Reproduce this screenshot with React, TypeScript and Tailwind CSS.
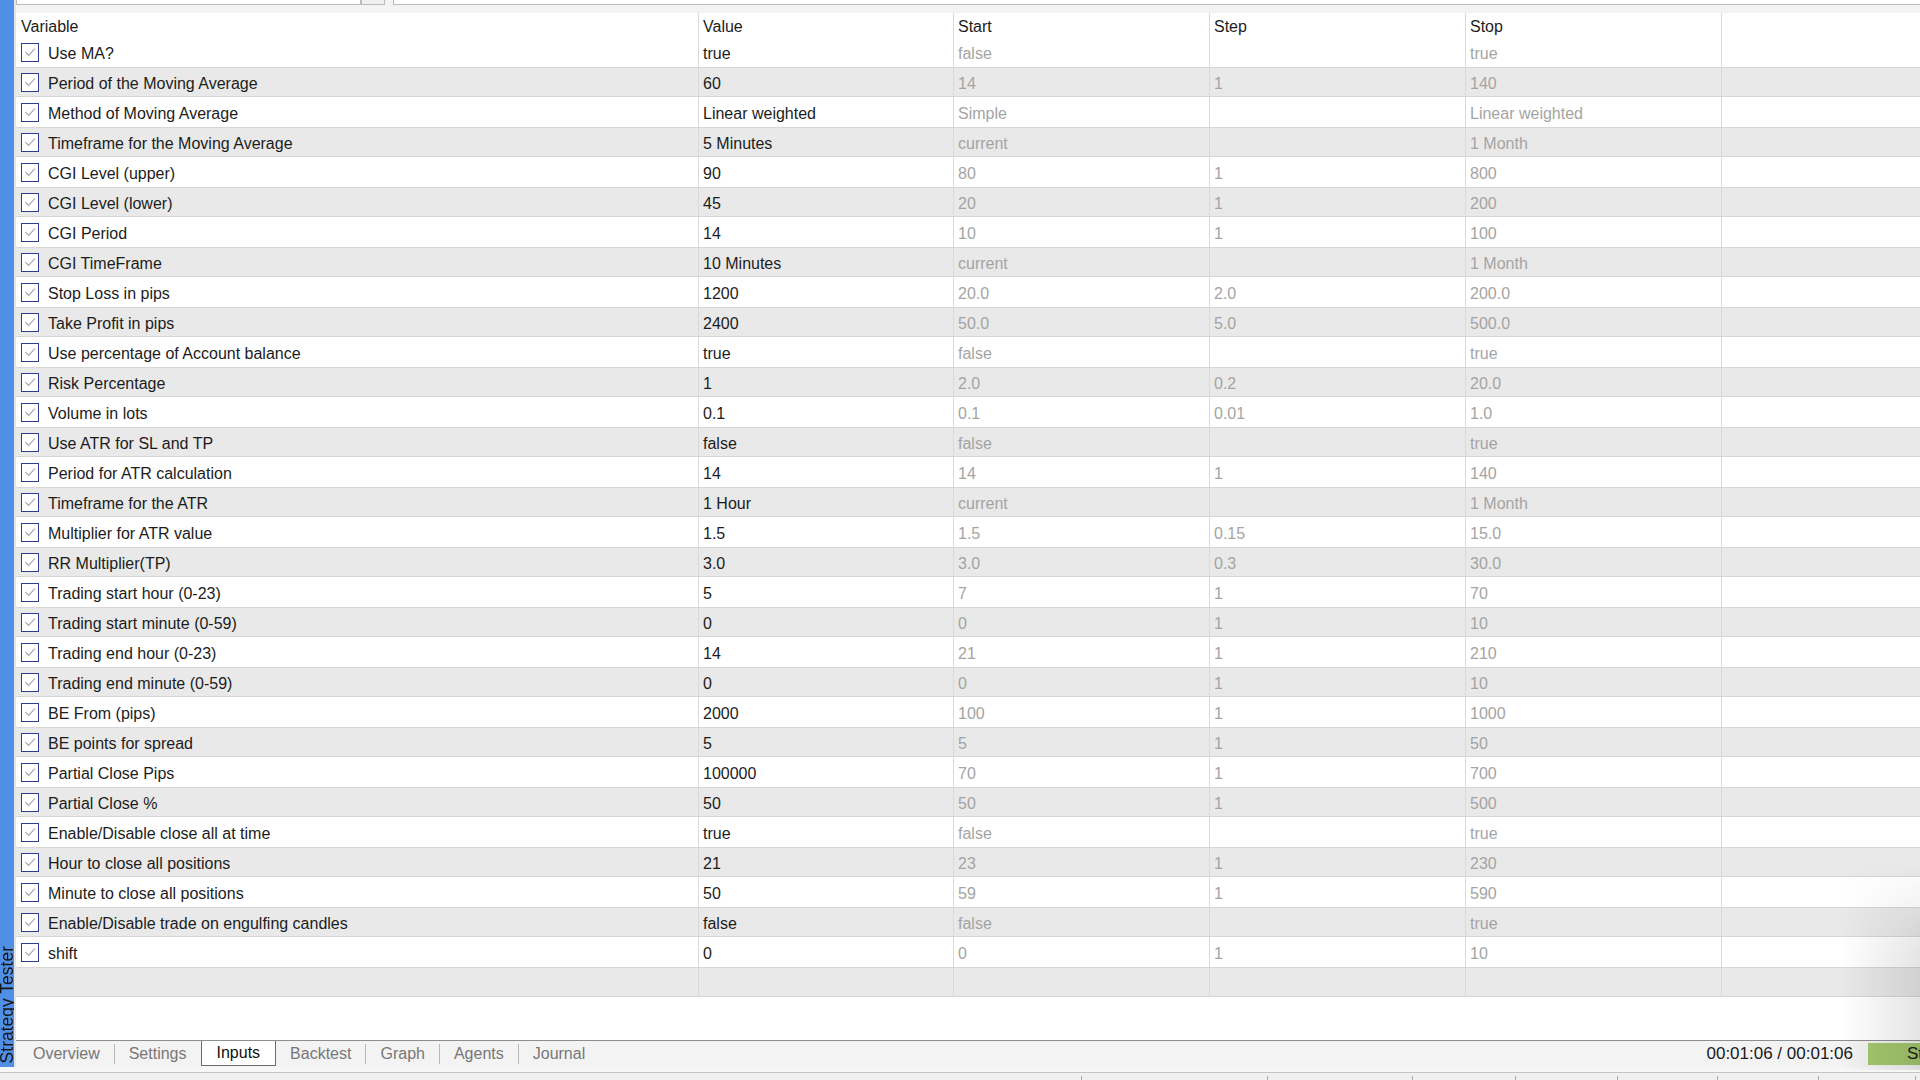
import React from "react";

type Row = [string, string, string, string, string];

const rows: Row[] = [
  ["Use MA?", "true", "false", "", "true"],
  ["Period of the Moving Average", "60", "14", "1", "140"],
  ["Method of Moving Average", "Linear weighted", "Simple", "", "Linear weighted"],
  ["Timeframe for the Moving Average", "5 Minutes", "current", "", "1 Month"],
  ["CGI Level (upper)", "90", "80", "1", "800"],
  ["CGI Level (lower)", "45", "20", "1", "200"],
  ["CGI Period", "14", "10", "1", "100"],
  ["CGI TimeFrame", "10 Minutes", "current", "", "1 Month"],
  ["Stop Loss in pips", "1200", "20.0", "2.0", "200.0"],
  ["Take Profit in pips", "2400", "50.0", "5.0", "500.0"],
  ["Use percentage of Account balance", "true", "false", "", "true"],
  ["Risk Percentage", "1", "2.0", "0.2", "20.0"],
  ["Volume in lots", "0.1", "0.1", "0.01", "1.0"],
  ["Use ATR for SL and TP", "false", "false", "", "true"],
  ["Period for ATR calculation", "14", "14", "1", "140"],
  ["Timeframe for the ATR", "1 Hour", "current", "", "1 Month"],
  ["Multiplier for ATR value", "1.5", "1.5", "0.15", "15.0"],
  ["RR Multiplier(TP)", "3.0", "3.0", "0.3", "30.0"],
  ["Trading start hour (0-23)", "5", "7", "1", "70"],
  ["Trading start minute (0-59)", "0", "0", "1", "10"],
  ["Trading end hour (0-23)", "14", "21", "1", "210"],
  ["Trading end minute (0-59)", "0", "0", "1", "10"],
  ["BE From (pips)", "2000", "100", "1", "1000"],
  ["BE points for spread", "5", "5", "1", "50"],
  ["Partial Close Pips", "100000", "70", "1", "700"],
  ["Partial Close %", "50", "50", "1", "500"],
  ["Enable/Disable close all at time", "true", "false", "", "true"],
  ["Hour to close all positions", "21", "23", "1", "230"],
  ["Minute to close all positions", "50", "59", "1", "590"],
  ["Enable/Disable trade on engulfing candles", "false", "false", "", "true"],
  ["shift", "0", "0", "1", "10"],
];

const grid = "grid grid-cols-[682px_255px_256px_256px_256px_1fr]";

function Check() {
  return (
    <span className="w-[18px] h-[19px] shrink-0 border-[1.5px] border-[#2f3c93] bg-white flex items-center justify-center">
      <svg width="14" height="14" viewBox="0 0 14 14">
        <path d="M2.5 7.2 L5.6 10.3 L11.8 3.6" fill="none" stroke="#a8a8a8" strokeWidth="1.2" />
      </svg>
    </span>
  );
}

function Cell({ text, muted }: { text: string; muted?: boolean }) {
  return (
    <div
      className={`flex items-center pl-[4px] border-l border-[#dadada] whitespace-nowrap ${
        muted ? "text-[#a4a4a4]" : "text-[#1c1c1c]"
      }`}
    >
      <span className="pt-[3px]">{text}</span>
    </div>
  );
}

function TableRow({ r, i }: { r: Row; i: number }) {
  const gray = i % 2 === 1;
  return (
    <div
      className={`${grid} h-[30px] ${
        gray ? "bg-[#e9e9e9] border-y border-[#d7d7d7]" : "bg-white"
      }`}
    >
      <div className="flex items-center pl-[5px] gap-[9px] text-[#1c1c1c]">
        <Check />
        <span className="whitespace-nowrap pt-[3px]">{r[0]}</span>
      </div>
      <Cell text={r[1]} />
      <Cell text={r[2]} muted />
      <Cell text={r[3]} muted />
      <Cell text={r[4]} muted />
      <div className="border-l border-[#dadada]" />
    </div>
  );
}

function Sep() {
  return <span className="w-px h-[20px] bg-[#b8b8b8] self-center" />;
}

function Tab({ label }: { label: string }) {
  return <span className="px-[14px] text-[#777777] leading-[26px] whitespace-nowrap">{label}</span>;
}

export default function App() {
  return (
    <div className="relative w-[1920px] h-[1080px] overflow-hidden bg-white font-['Liberation_Sans',Arial,sans-serif] text-[16px] flex flex-col">
      <div className="flex h-[1067px]">
        {/* Sidebar */}
        <div className="w-[14px] h-full bg-[#4f8fe6] flex flex-col justify-end overflow-hidden">
          <span className="[writing-mode:vertical-rl] rotate-180 text-[17.5px] leading-[14px] text-[#161616] whitespace-nowrap mb-[4px]">
            Strategy Tester
          </span>
        </div>
        <div className="w-[2px] h-full bg-[#e4e4e4]" />
        {/* Main */}
        <div className="flex-1 flex flex-col min-w-0">
          {/* top inputs strip */}
          <div className="h-[5px] flex bg-[#f3f3f3]">
            <div className="w-[345px] h-full bg-white border-x border-b border-[#bcbcbc]" />
            <div className="w-[24px] h-full bg-[#f0f0f0] border-x border-b border-[#bcbcbc]" />
            <div className="w-[8px]" />
            <div className="flex-1 h-full bg-white border-l border-b border-[#bcbcbc]" />
          </div>
          <div className="h-[8px] bg-[#f3f3f3]" />
          {/* Header */}
          <div className={`${grid} h-[24px] bg-white text-[#1c1c1c]`}>
            <div className="flex items-center pl-[5px]">
              <span className="pt-[2px]">Variable</span>
            </div>
            <div className="flex items-center pl-[4px] border-l border-[#dadada]">
              <span className="pt-[2px]">Value</span>
            </div>
            <div className="flex items-center pl-[4px] border-l border-[#dadada]">
              <span className="pt-[2px]">Start</span>
            </div>
            <div className="flex items-center pl-[4px] border-l border-[#dadada]">
              <span className="pt-[2px]">Step</span>
            </div>
            <div className="flex items-center pl-[4px] border-l border-[#dadada]">
              <span className="pt-[2px]">Stop</span>
            </div>
            <div className="border-l border-[#dadada]" />
          </div>
          {rows.map((r, i) => (
            <TableRow key={i} r={r} i={i} />
          ))}
          <div className={`${grid} h-[30px] bg-[#e9e9e9] border-y border-[#d7d7d7]`}>
            <div />
            <div className="border-l border-[#dadada]" />
            <div className="border-l border-[#dadada]" />
            <div className="border-l border-[#dadada]" />
            <div className="border-l border-[#dadada]" />
            <div className="border-l border-[#dadada]" />
          </div>
          <div className="h-[43px] bg-white" />
          {/* Tab bar */}
          <div className="h-[27px] border-t border-[#8e8e8e] bg-[#f3f3f3] flex items-start justify-between">
            <div className="flex h-full items-start pl-[3px]">
              <Tab label="Overview" />
              <Sep />
              <Tab label="Settings" />
              <span className="px-[15px] h-[25px] leading-[24px] bg-white border-x border-b border-[#6c6c6c] text-[#111111]">
                Inputs
              </span>
              <Tab label="Backtest" />
              <Sep />
              <Tab label="Graph" />
              <Sep />
              <Tab label="Agents" />
              <Sep />
              <Tab label="Journal" />
            </div>
            <div className="flex items-center h-full">
              <span className="text-[17px] text-[#1a1a1a] mr-[15px] whitespace-nowrap">00:01:06 / 00:01:06</span>
              <span className="w-[52px] h-[22px] bg-[#a4c86f] pl-[39px] leading-[22px] text-[17px] text-[#1a1a1a] overflow-hidden whitespace-nowrap">
                Start
              </span>
            </div>
          </div>
        </div>
      </div>
      {/* Status strip */}
      <div className="h-[13px] flex flex-col">
        <div className="h-[5px] bg-[#f7f7f7]" />
        <div className="flex-1 border-t border-[#c3c3c3] bg-[#f0f0f0] flex items-end">
          <div className="w-[1081px] shrink-0" />
          {[186, 145, 103, 102, 100, 101, 97, 20].map((w, i) => (
            <div key={i} className="h-[4px] shrink-0 border-l border-[#a9a9a9]" style={{ width: w }} />
          ))}
        </div>
      </div>
      {/* right-side shadow */}
      <div className="absolute right-0 top-[860px] w-[80px] h-[210px] bg-gradient-to-r from-transparent to-[rgba(0,0,0,0.1)] [mask-image:linear-gradient(to_bottom,transparent,black_45%)] pointer-events-none" />
    </div>
  );
}
